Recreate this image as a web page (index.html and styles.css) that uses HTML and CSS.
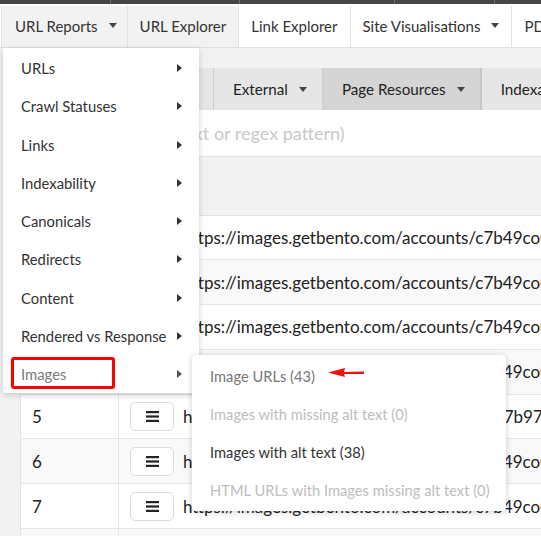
FILE: index.html
```html
<!DOCTYPE html>
<html lang="en">
<head>
<meta charset="utf-8">
<title>URL Reports</title>
<link rel="stylesheet" href="styles.css">
</head>
<body>
<div class="topbar"><span class="seg s1"></span><span class="seg s2"></span><span class="seg s3"></span><span class="seg s4"></span></div>
<nav class="tabs">
  <div class="tab tab-grey tab-first">URL Reports <span class="caret"></span></div>
  <div class="tab tab-grey">URL Explorer</div>
  <div class="tab">Link Explorer</div>
  <div class="tab">Site Visualisations <span class="caret"></span></div>
  <div class="tab">PDF Reports</div>
</nav>
<main class="main">
  <div class="panel">
    <div class="subtabs">
      <div class="subtab subtab-first">Internal <span class="caret"></span></div>
      <div class="subtab">External <span class="caret"></span></div>
      <div class="subtab active">Page Resources <span class="caret"></span></div>
      <div class="subtab">Indexability <span class="caret"></span></div>
    </div>
    <div class="search">Search (text or regex pattern)</div>
    <table class="grid">
      <thead><tr><th class="num"></th><th class="addr"></th></tr></thead>
      <tbody>
        <tr><td class="num">1</td><td class="addr"><span class="btn"><svg width="13" height="11" viewBox="0 0 13 11"><rect y="0" width="13" height="2.2"/><rect y="4.4" width="13" height="2.2"/><rect y="8.8" width="13" height="2.2"/></svg></span><span class="url">https://images.getbento.com/accounts/c7b49co0a/media/images/1.jpg</span></td></tr>
        <tr class="alt"><td class="num">2</td><td class="addr"><span class="btn"><svg width="13" height="11" viewBox="0 0 13 11"><rect y="0" width="13" height="2.2"/><rect y="4.4" width="13" height="2.2"/><rect y="8.8" width="13" height="2.2"/></svg></span><span class="url">https://images.getbento.com/accounts/c7b49co0a/media/images/2.jpg</span></td></tr>
        <tr><td class="num">3</td><td class="addr"><span class="btn"><svg width="13" height="11" viewBox="0 0 13 11"><rect y="0" width="13" height="2.2"/><rect y="4.4" width="13" height="2.2"/><rect y="8.8" width="13" height="2.2"/></svg></span><span class="url">https://images.getbento.com/accounts/c7b49co0a/media/images/3.jpg</span></td></tr>
        <tr class="alt"><td class="num">4</td><td class="addr"><span class="btn"><svg width="13" height="11" viewBox="0 0 13 11"><rect y="0" width="13" height="2.2"/><rect y="4.4" width="13" height="2.2"/><rect y="8.8" width="13" height="2.2"/></svg></span><span class="url">https://images.getbento.com/accounts/c7b49co0a/media/images/4.jpg</span></td></tr>
        <tr><td class="num">5</td><td class="addr"><span class="btn"><svg width="13" height="11" viewBox="0 0 13 11"><rect y="0" width="13" height="2.2"/><rect y="4.4" width="13" height="2.2"/><rect y="8.8" width="13" height="2.2"/></svg></span><span class="url">https://images.getbento.com/accounts/d2e7b97c1f/media/images/5.jpg</span></td></tr>
        <tr class="alt"><td class="num">6</td><td class="addr"><span class="btn"><svg width="13" height="11" viewBox="0 0 13 11"><rect y="0" width="13" height="2.2"/><rect y="4.4" width="13" height="2.2"/><rect y="8.8" width="13" height="2.2"/></svg></span><span class="url">https://images.getbento.com/accounts/c7b49co0a/media/images/6.jpg</span></td></tr>
        <tr><td class="num">7</td><td class="addr"><span class="btn"><svg width="13" height="11" viewBox="0 0 13 11"><rect y="0" width="13" height="2.2"/><rect y="4.4" width="13" height="2.2"/><rect y="8.8" width="13" height="2.2"/></svg></span><span class="url">https://images.getbento.com/accounts/c7b49co0a/media/images/7.jpg</span></td></tr>
        <tr class="alt"><td class="num">8</td><td class="addr"><span class="btn"><svg width="13" height="11" viewBox="0 0 13 11"><rect y="0" width="13" height="2.2"/><rect y="4.4" width="13" height="2.2"/><rect y="8.8" width="13" height="2.2"/></svg></span><span class="url">https://images.getbento.com/accounts/c7b49co0a/media/images/8.jpg</span></td></tr>
      </tbody>
    </table>
  </div>
</main>

<div class="menu">
  <div class="menu-item">URLs <span class="arrow"></span></div>
  <div class="menu-item">Crawl Statuses <span class="arrow"></span></div>
  <div class="menu-item">Links <span class="arrow"></span></div>
  <div class="menu-item">Indexability <span class="arrow"></span></div>
  <div class="menu-item">Canonicals <span class="arrow"></span></div>
  <div class="menu-item">Redirects <span class="arrow"></span></div>
  <div class="menu-item">Content <span class="arrow"></span></div>
  <div class="menu-item">Rendered vs Response <span class="arrow"></span></div>
  <div class="menu-item menu-item-open">Images <span class="arrow"></span>
    <span class="highlight"></span>
    <div class="submenu">
      <div class="sub-item sub-hover">Image URLs (43)</div>
      <div class="sub-item sub-disabled">Images with missing alt text (0)</div>
      <div class="sub-item">Images with alt text (38)</div>
      <div class="sub-item sub-disabled">HTML URLs with Images missing alt text (0)</div>
    </div>
  </div>
</div>

<svg class="pointer" width="38" height="12" viewBox="0 0 38 12">
  <polygon points="0,5.5 17,1 16,5 36,4.5 36,7 16,7 17,10" fill="#ee1111"/>
</svg>
</body>
</html>
```

FILE: styles.css
```css
* { box-sizing: border-box; }

html, body {
  margin: 0;
  width: 541px;
  height: 536px;
  overflow: hidden;
}

body {
  position: relative;
  font-family: Lato, "Open Sans", "Liberation Sans", sans-serif;
  color: #333;
  background: #fff;
  white-space: nowrap;
}

/* dark strip at the very top */
.topbar {
  height: 4px;
  background: #454545;
  display: flex;
}
.seg { height: 100%; border-right: 1px solid #6e6e6e; }
.s1 { width: 111px; }
.s2 { width: 129px; }
.s3 { width: 155px; }
.s4 { width: 100px; }

/* main tabs */
.tabs {
  display: flex;
  height: 44px;
  padding: 2px 0 0 1px;
  border-bottom: 1px solid #e0e0e0;
}
.tab {
  display: flex;
  align-items: center;
  gap: 11px;
  padding: 0 12px 2px;
  font-size: 15px;
  color: #333;
  background: #fff;
  border-right: 1px solid #e2e2e2;
}
.tab-first { border-left: 1px solid #e2e2e2; padding-left: 13px; padding-right: 10px; }
.tab-grey { background: #f2f2f2; }

.caret {
  display: inline-block;
  width: 0;
  height: 0;
  border-left: 4px solid transparent;
  border-right: 4px solid transparent;
  border-top: 5px solid #444;
}

/* page body */
.main {
  background: #f2f2f2;
  padding: 20px 0 0 20px;
  height: 488px;
}
.panel {
  background: #fff;
  width: 760px;
}

.subtabs {
  display: flex;
  height: 42px;
  background: #e6e6e6;
}
.subtab {
  display: flex;
  align-items: center;
  gap: 11px;
  padding: 0 15px 0 19px;
  font-size: 15.2px;
  color: #222;
  background: #e6e6e6;
  border-right: 1px solid #cdcdcd;
}
.subtab-first { width: 194px; }
.subtab.active { background: #d5d5d5; border-right: 2px solid #c6c6c6; }

.search {
  height: 47px;
  display: flex;
  align-items: center;
  padding-left: 96px;
  font-size: 18px;
  color: #c9c9c9;
  border-bottom: 1px solid #e2e2e2;
}

.grid {
  border-collapse: collapse;
  width: 760px;
  border-left: 1px solid #e2e2e2;
  font-size: 17px;
  color: #222;
}
.grid th {
  height: 58px;
  background: #f2f2f2;
  border-bottom: 1px solid #e2e2e2;
  padding: 0;
}
.grid td {
  height: 44.8px;
  padding: 0;
  border-bottom: 1px solid #e6e6e6;
}
.grid tr.alt td { background: #f9f9f9; }
.num {
  width: 98px;
  padding-left: 11px !important;
  border-right: 1px solid #e6e6e6;
  text-align: left;
}
.addr { padding-left: 11px !important; }
.btn {
  display: inline-flex;
  align-items: center;
  justify-content: center;
  width: 44px;
  height: 29px;
  border: 1px solid #dcdcdc;
  border-radius: 5px;
  background: #fff;
  vertical-align: middle;
  margin-right: 9px;
}
.btn svg { fill: #222; display: block; }
.url { vertical-align: middle; }

/* dropdown menu */
.menu {
  position: absolute;
  left: 3px;
  top: 48px;
  width: 196px;
  padding-top: 1px;
  background: #fff;
  border-radius: 0 0 3px 3px;
  box-shadow: 0 2px 6px rgba(0, 0, 0, 0.18);
}
.menu-item {
  position: relative;
  height: 38.25px;
  display: flex;
  align-items: center;
  justify-content: space-between;
  padding: 0 17px 0 18px;
  font-size: 14.8px;
  color: #333;
}
.arrow {
  display: inline-block;
  width: 0;
  height: 0;
  border-top: 4px solid transparent;
  border-bottom: 4px solid transparent;
  border-left: 5px solid #333;
}
.menu-item-open { color: #7a7a7a; }
.menu-item-open .arrow { border-left-color: #555; }

.highlight {
  position: absolute;
  left: 8px;
  top: 2px;
  width: 104px;
  height: 32px;
  border: 3px solid #f00;
  border-radius: 3px;
}

.submenu {
  position: absolute;
  left: 189px;
  top: 0;
  width: 314px;
  padding: 2px 0;
  background: #fff;
  border-radius: 4px;
  box-shadow: 0 1px 6px rgba(0, 0, 0, 0.2);
}
.sub-item {
  height: 38px;
  display: flex;
  align-items: center;
  padding-left: 18px;
  font-size: 14.7px;
  color: #333;
}
.sub-hover { color: #777; }
.sub-disabled { color: #bdbdbd; }

/* annotation arrow */
.pointer {
  position: absolute;
  left: 328px;
  top: 367px;
}
```
